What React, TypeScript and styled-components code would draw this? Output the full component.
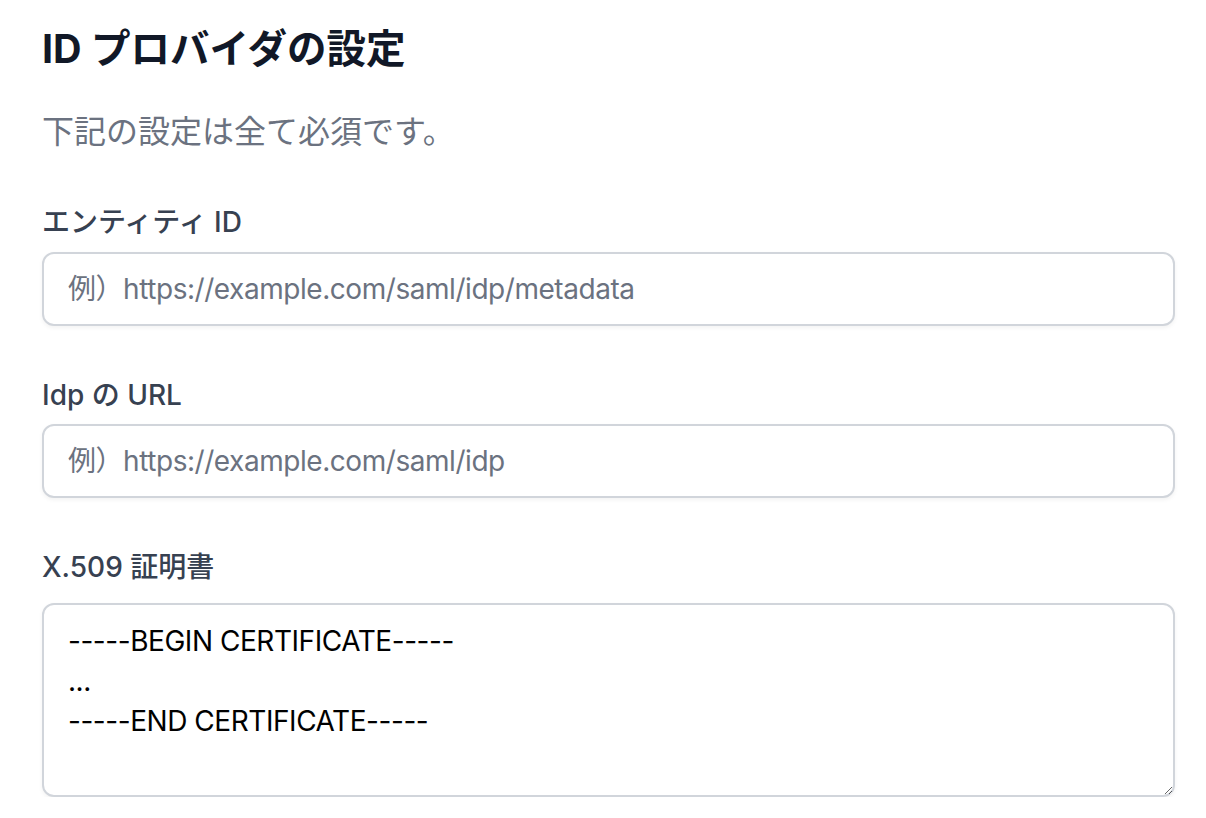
import React from 'react';
import styled, { createGlobalStyle } from 'styled-components';

const GlobalStyle = createGlobalStyle`
  html, body {
    margin: 0;
    padding: 0;
    background: #ffffff;
  }
  body {
    font-family: "Inter", "Noto Sans CJK JP", sans-serif;
    -webkit-font-smoothing: antialiased;
  }
  * {
    box-sizing: border-box;
  }
`;

const Page = styled.main`
  width: 1206px;
  padding: 24px 31px 0 42px;
`;

const Title = styled.h1`
  margin: 0;
  font-size: 39.5px;
  line-height: 50px;
  font-weight: 700;
  color: #111827;
`;

const Description = styled.p`
  margin: 34px 0 0;
  font-size: 32px;
  line-height: 48px;
  color: #6b7280;
`;

const Fields = styled.div`
  margin-top: 46px;
  display: flex;
  flex-direction: column;
  gap: 49px;
`;

const Field = styled.div<{ $labelGap: number }>`
  display: flex;
  flex-direction: column;
  gap: ${(p) => p.$labelGap}px;
`;

const Label = styled.label`
  font-size: 28px;
  line-height: 40px;
  font-weight: 500;
  color: #374151;
`;

const controlBase = `
  width: 100%;
  border: 2px solid #d1d5db;
  border-radius: 12px;
  background: #ffffff;
  box-shadow: 0 2px 4px rgba(0, 0, 0, 0.05);
  font-family: "Inter", "Noto Sans CJK JP", sans-serif;
  font-size: 28px;
  line-height: 40px;
  letter-spacing: -0.45px;
  color: #000000;
  outline: none;
  &::placeholder {
    color: #6b7280;
    opacity: 1;
  }
`;

const TextInput = styled.input`
  ${controlBase}
  height: 74px;
  padding: 0 24px;
`;

const TextArea = styled.textarea`
  ${controlBase}
  display: block;
  height: 194px;
  padding: 16px 24px;
  resize: vertical;
`;

const certificate = '-----BEGIN CERTIFICATE-----\n...\n-----END CERTIFICATE-----';

export default function App() {
  return (
    <>
      <GlobalStyle />
      <Page>
        <Title>ID プロバイダの設定</Title>
        <Description>下記の設定は全て必須です。</Description>
        <Fields>
          <Field $labelGap={10}>
            <Label htmlFor="entity-id">エンティティ ID</Label>
            <TextInput
              id="entity-id"
              type="text"
              placeholder="例）https://example.com/saml/idp/metadata"
            />
          </Field>
          <Field $labelGap={9}>
            <Label htmlFor="idp-url">Idp の URL</Label>
            <TextInput id="idp-url" type="text" placeholder="例）https://example.com/saml/idp" />
          </Field>
          <Field $labelGap={16}>
            <Label htmlFor="cert">X.509 証明書</Label>
            <TextArea id="cert" defaultValue={certificate} />
          </Field>
        </Fields>
      </Page>
    </>
  );
}
